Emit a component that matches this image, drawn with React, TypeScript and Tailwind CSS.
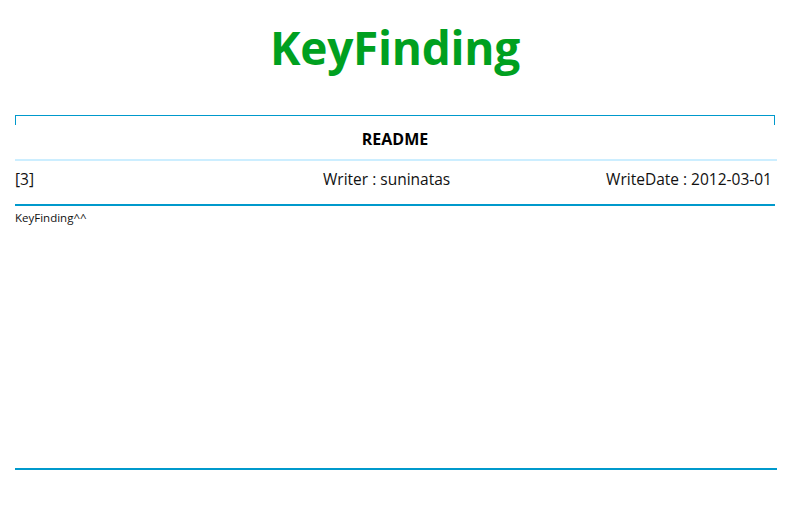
export default function App() {
  return (
    <div className="w-[811px] h-[515px] bg-white overflow-hidden" style={{ fontFamily: '"Open Sans", "Noto Sans", sans-serif' }}>
      <div className="w-[790px]">
        <div className="h-[115px] flex justify-center pt-[15px]">
          <h1 className="text-[46px] leading-[64px] font-bold text-[#00a020] tracking-[-0.3px]">KeyFinding</h1>
        </div>
        <div className="ml-[15px] w-[760px]">
          <div className="h-[10px] border-t border-x border-[#0099cc]" />
          <div className="h-[34px] flex items-center justify-center pb-[6px]">
            <span className="text-[16px] font-bold text-black">README</span>
          </div>
          <div className="h-[2px] bg-[#cceeff] w-[762px]" />
          <div className="h-[43px] grid grid-cols-[308px_1fr_auto] items-center pb-[6px] text-[15.5px] text-[#111] pr-[3px]">
            <span>[3]</span>
            <span>Writer : suninatas</span>
            <span>WriteDate : 2012-03-01</span>
          </div>
          <div className="h-[2px] bg-[#0099cc]" />
          <div className="h-[262px] pt-[4px]">
            <div className="text-[11.5px] leading-[16px] text-[#111]">KeyFinding^^</div>
          </div>
          <div className="h-[2px] bg-[#0099cc] w-[762px]" />
        </div>
      </div>
    </div>
  );
}
